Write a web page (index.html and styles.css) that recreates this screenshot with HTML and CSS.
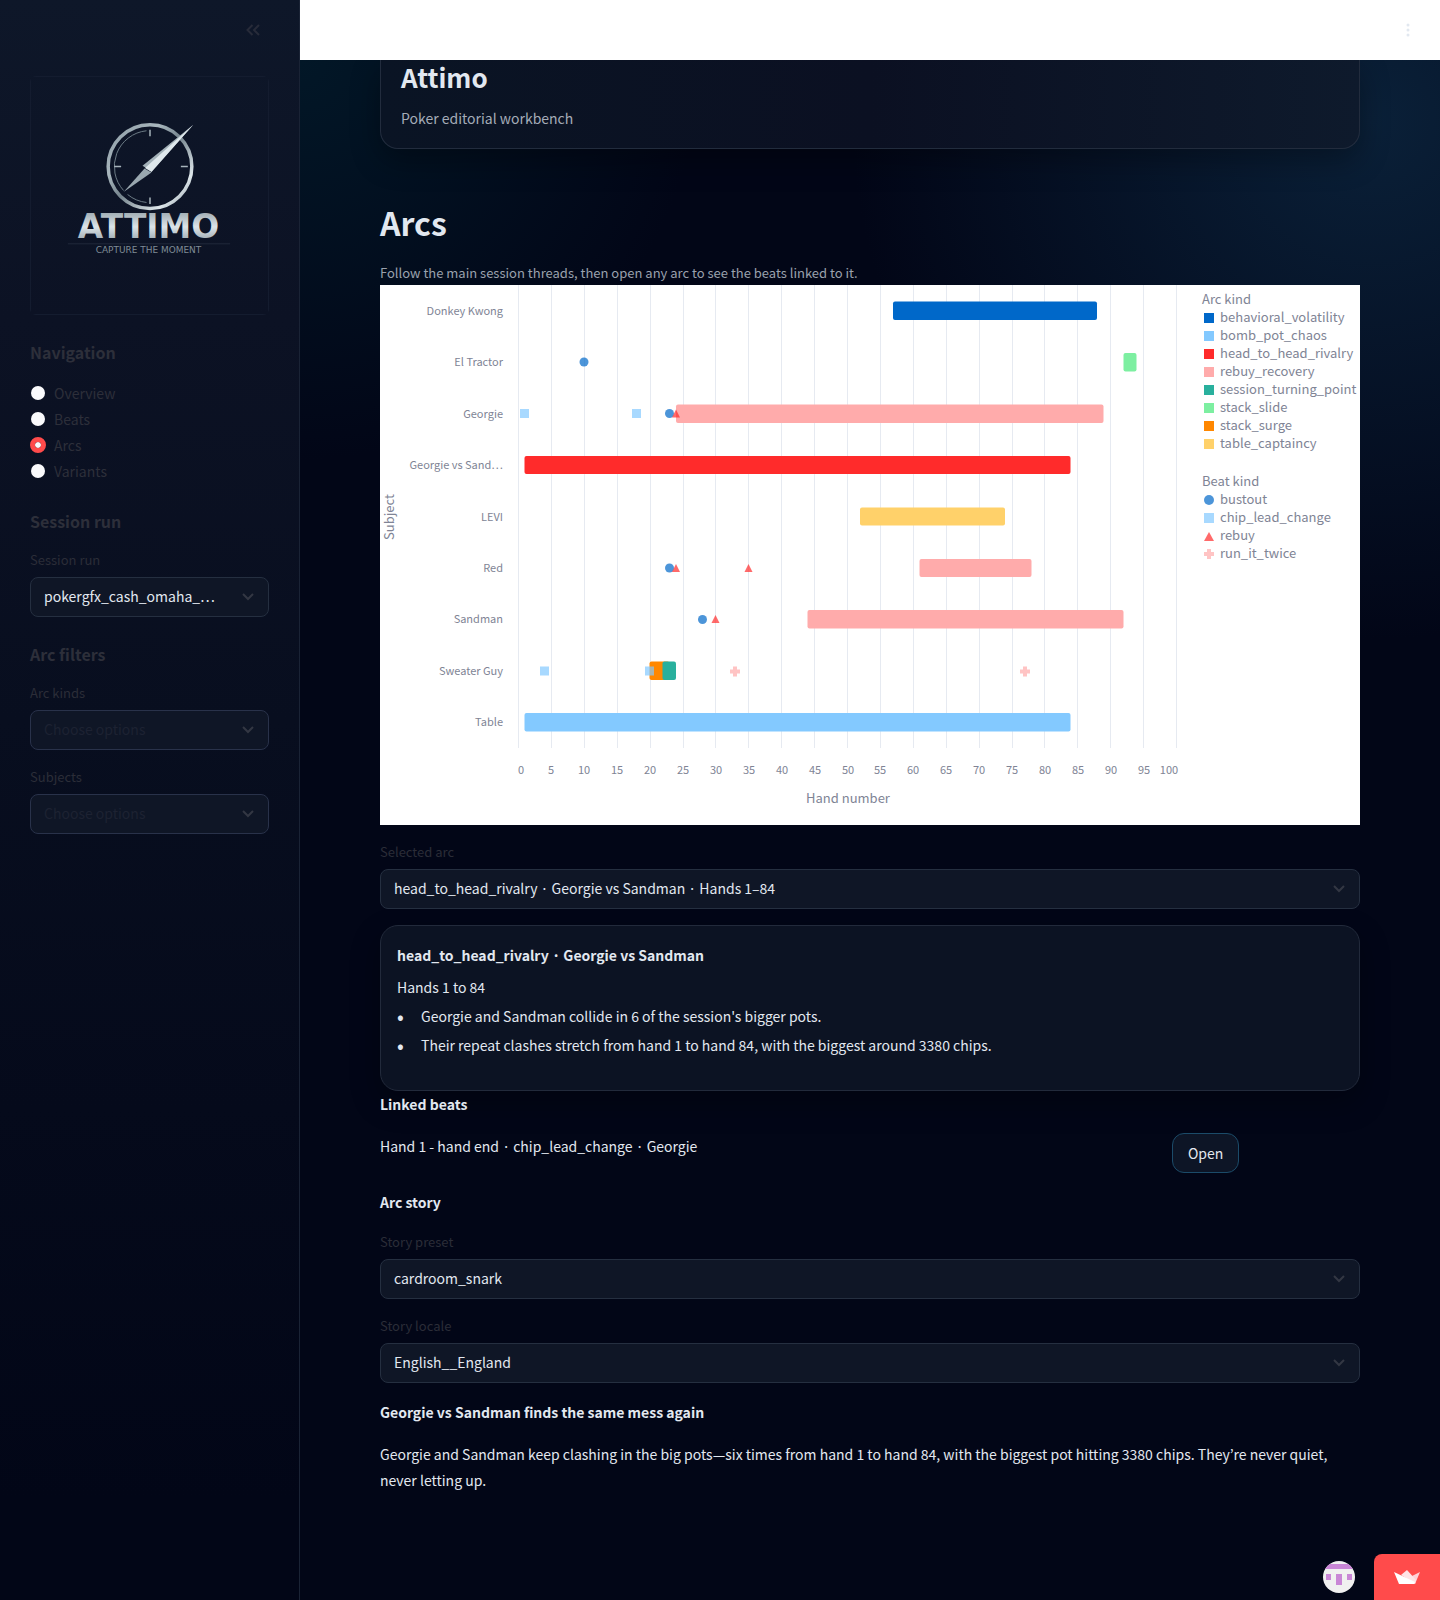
FILE: index.html
```html
<!DOCTYPE html>
<html lang="en">
<head>
  <meta charset="UTF-8">
  <meta name="viewport" content="width=device-width, initial-scale=1.0">
  <title>Attimo - Arcs</title>
  <link rel="stylesheet" href="styles.css">
</head>
<body>

  <!-- Sidebar -->
  <aside class="sidebar">
    <div class="sidebar-top">
      <button class="icon-btn" type="button" aria-label="Collapse sidebar">
        <svg width="20" height="20" viewBox="0 0 20 20" fill="none" stroke="currentColor" stroke-width="2"><path d="M9.5 5 4.5 10l5 5M16 5l-5 5 5 5"/></svg>
      </button>
    </div>

    <svg class="logo" viewBox="0 0 240 240" role="img" aria-label="Attimo, capture the moment">
      <defs>
        <linearGradient id="ring" x1="0" y1="0" x2="1" y2="1">
          <stop offset="0" stop-color="#8b9aa3"/>
          <stop offset=".3" stop-color="#a9b7be"/>
          <stop offset=".5" stop-color="#75848d"/>
          <stop offset=".8" stop-color="#dde6ea"/>
          <stop offset="1" stop-color="#83929b"/>
        </linearGradient>
        <linearGradient id="steel" x1="0" y1="0" x2="0" y2="1">
          <stop offset="0" stop-color="#8c9aa2"/>
          <stop offset=".5" stop-color="#dce4e8"/>
          <stop offset="1" stop-color="#84929b"/>
        </linearGradient>
      </defs>
      <rect class="logo-frame" x="0.5" y="0.5" width="239" height="239"/>
      <circle cx="120.5" cy="91" r="42" fill="none" stroke="url(#ring)" stroke-width="3.5"/>
      <path d="M117 55A36 36 0 0 0 94 115M98 119A36 36 0 0 0 117 127" fill="none" stroke="#6c7b85"/>
      <path d="M120.5 54v6.5M120.5 122v6.5M84.5 91h7M151.5 91h7" fill="none" stroke="#a7b4bb" stroke-width="1.5"/>
      <path d="M164 49 113 90l9 6z" fill="#a3b1b8"/>
      <path d="M164 49 122 96.5l-6.5-4z" fill="#dfe8ec"/>
      <path d="m115 93 7 4-28 19.5z" fill="#9aa8b0"/>
      <text class="logo-name" x="119" y="163" fill="url(#steel)">ATTIMO</text>
      <path d="M38 168.5h163" stroke="#20283a"/>
      <text class="logo-tag" x="119" y="178">CAPTURE THE MOMENT</text>
    </svg>

    <h3 class="side-title">Navigation</h3>
    <div class="radio-list">
      <label class="radio"><input type="radio" name="page">Overview</label>
      <label class="radio"><input type="radio" name="page">Beats</label>
      <label class="radio"><input type="radio" name="page" checked>Arcs</label>
      <label class="radio"><input type="radio" name="page">Variants</label>
    </div>

    <h3 class="side-title">Session run</h3>
    <div class="field">
      <label for="run">Session run</label>
      <div class="select">
        <select id="run"><option>pokergfx_cash_omaha_…</option></select>
        <svg width="12" height="8" viewBox="0 0 12 8"><path d="m1 1 5 5 5-5"/></svg>
      </div>
    </div>

    <h3 class="side-title">Arc filters</h3>
    <div class="field">
      <label for="kinds">Arc kinds</label>
      <div class="select empty">
        <select id="kinds"><option>Choose options</option></select>
        <svg width="12" height="8" viewBox="0 0 12 8"><path d="m1 1 5 5 5-5"/></svg>
      </div>
    </div>
    <div class="field">
      <label for="subjects">Subjects</label>
      <div class="select empty">
        <select id="subjects"><option>Choose options</option></select>
        <svg width="12" height="8" viewBox="0 0 12 8"><path d="m1 1 5 5 5-5"/></svg>
      </div>
    </div>
  </aside>

  <!-- Main column -->
  <div class="page">
    <header class="toolbar">
      <button class="icon-btn menu-btn" type="button" aria-label="Main menu">
        <svg width="20" height="20" viewBox="0 0 20 20" fill="currentColor"><circle cx="10" cy="5" r="1.5"/><circle cx="10" cy="10" r="1.5"/><circle cx="10" cy="15" r="1.5"/></svg>
      </button>
    </header>

    <main class="content">
      <section class="hero">
        <h1>Attimo</h1>
        <p>Poker editorial workbench</p>
      </section>

      <h2 class="page-title">Arcs</h2>
      <p class="caption">Follow the main session threads, then open any arc to see the beats linked to it.</p>

      <!-- Timeline: x = 138.5 + hand * 6.58, rows are 51.4 apart -->
      <svg class="chart" viewBox="0 0 980 540" role="img" aria-label="Arcs and beats by subject and hand number">
        <path class="grid" d="M138.5 0v463M171.5 0v463M204.5 0v463M237.5 0v463M270.5 0v463M303.5 0v463M335.5 0v463M368.5 0v463M401.5 0v463M434.5 0v463M467.5 0v463M500.5 0v463M533.5 0v463M566.5 0v463M599.5 0v463M632.5 0v463M664.5 0v463M697.5 0v463M730.5 0v463M763.5 0v463M796.5 0v463"/>

        <g class="bars">
          <rect class="volatility" x="513" y="16.5" width="204" height="18.5" rx="2"/>
          <rect class="slide" x="743.5" y="68" width="13" height="18.5" rx="2"/>
          <rect class="recovery" x="296" y="119.5" width="427.5" height="18.5" rx="2"/>
          <rect class="rivalry" x="144.5" y="171" width="546" height="18" rx="2"/>
          <rect class="captaincy" x="480" y="222.5" width="145" height="18" rx="2"/>
          <rect class="recovery" x="539.5" y="274" width="112" height="18" rx="2"/>
          <rect class="recovery" x="427.5" y="325" width="316" height="18.5" rx="2"/>
          <rect class="surge" x="269.5" y="376.5" width="20" height="18.5" rx="2"/>
          <rect class="turning" x="282.5" y="376.5" width="13.5" height="18.5" rx="2"/>
          <rect class="bomb" x="144.5" y="428" width="546" height="18.5" rx="2"/>
        </g>

        <g class="beats">
          <circle class="bustout" cx="204" cy="77" r="4.5"/>
          <rect class="lead" x="140" y="124" width="9" height="9"/>
          <rect class="lead" x="252" y="124" width="9" height="9"/>
          <circle class="bustout" cx="289.5" cy="128.5" r="4.5"/>
          <path class="rebuy" d="m296 124.5 4 8h-8z"/>
          <circle class="bustout" cx="289.5" cy="283" r="4.5"/>
          <path class="rebuy" d="m296 279 4 8h-8z"/>
          <path class="rebuy" d="m368.5 279 4 8h-8z"/>
          <circle class="bustout" cx="322.5" cy="334.5" r="4.5"/>
          <path class="rebuy" d="m335.5 330 4 8h-8z"/>
          <rect class="lead" x="160" y="381.5" width="9" height="9"/>
          <rect class="lead" x="265" y="381.5" width="9" height="9"/>
          <path class="twice" d="M353 381.5h4v3h3v4h-3v3h-4v-3h-3v-4h3z"/>
          <path class="twice" d="M643 381.5h4v3h3v4h-3v3h-4v-3h-3v-4h3z"/>
        </g>

        <g class="row-labels">
          <text x="123" y="30">Donkey Kwong</text>
          <text x="123" y="81">El Tractor</text>
          <text x="123" y="133">Georgie</text>
          <text x="123" y="184">Georgie vs Sand…</text>
          <text x="123" y="236">LEVI</text>
          <text x="123" y="287">Red</text>
          <text x="123" y="338">Sandman</text>
          <text x="123" y="390">Sweater Guy</text>
          <text x="123" y="441">Table</text>
        </g>

        <g class="ticks">
          <text x="141" y="489">0</text>
          <text x="171" y="489">5</text>
          <text x="204" y="489">10</text>
          <text x="237" y="489">15</text>
          <text x="270" y="489">20</text>
          <text x="303" y="489">25</text>
          <text x="336" y="489">30</text>
          <text x="369" y="489">35</text>
          <text x="402" y="489">40</text>
          <text x="435" y="489">45</text>
          <text x="468" y="489">50</text>
          <text x="500" y="489">55</text>
          <text x="533" y="489">60</text>
          <text x="566" y="489">65</text>
          <text x="599" y="489">70</text>
          <text x="632" y="489">75</text>
          <text x="665" y="489">80</text>
          <text x="698" y="489">85</text>
          <text x="731" y="489">90</text>
          <text x="764" y="489">95</text>
          <text x="789" y="489">100</text>
        </g>
        <text class="axis-title" x="468" y="518">Hand number</text>
        <text class="axis-title" transform="translate(14 232) rotate(-90)">Subject</text>

        <g class="legend">
          <text x="822" y="19">Arc kind</text>
          <rect class="volatility" x="824" y="28" width="10" height="10"/><text x="840" y="37">behavioral_volatility</text>
          <rect class="bomb" x="824" y="46" width="10" height="10"/><text x="840" y="55">bomb_pot_chaos</text>
          <rect class="rivalry" x="824" y="64" width="10" height="10"/><text x="840" y="73">head_to_head_rivalry</text>
          <rect class="recovery" x="824" y="82" width="10" height="10"/><text x="840" y="91">rebuy_recovery</text>
          <rect class="turning" x="824" y="100" width="10" height="10"/><text x="840" y="109">session_turning_point</text>
          <rect class="slide" x="824" y="118" width="10" height="10"/><text x="840" y="127">stack_slide</text>
          <rect class="surge" x="824" y="136" width="10" height="10"/><text x="840" y="145">stack_surge</text>
          <rect class="captaincy" x="824" y="154" width="10" height="10"/><text x="840" y="163">table_captaincy</text>

          <text x="822" y="201">Beat kind</text>
          <circle class="bustout" cx="829" cy="215" r="5"/><text x="840" y="219">bustout</text>
          <rect class="lead" x="824" y="228" width="10" height="10"/><text x="840" y="237">chip_lead_change</text>
          <path class="rebuy" d="m829 247 5 9h-10z"/><text x="840" y="255">rebuy</text>
          <path class="twice" d="M827 264h4v3h3v4h-3v3h-4v-3h-3v-4h3z"/><text x="840" y="273">run_it_twice</text>
        </g>
      </svg>

      <div class="field">
        <label for="arc">Selected arc</label>
        <div class="select">
          <select id="arc"><option>head_to_head_rivalry · Georgie vs Sandman · Hands 1–84</option></select>
          <svg width="12" height="8" viewBox="0 0 12 8"><path d="m1 1 5 5 5-5"/></svg>
        </div>
      </div>

      <section class="arc-card">
        <h3>head_to_head_rivalry · Georgie vs Sandman</h3>
        <p>Hands 1 to 84</p>
        <ul>
          <li>Georgie and Sandman collide in 6 of the session's bigger pots.</li>
          <li>Their repeat clashes stretch from hand 1 to hand 84, with the biggest around 3380 chips.</li>
        </ul>
      </section>

      <h3 class="block-title">Linked beats</h3>
      <div class="beat-row">
        <p>Hand 1 - hand end · chip_lead_change · Georgie</p>
        <div><button class="open-btn" type="button">Open</button></div>
      </div>

      <h3 class="block-title">Arc story</h3>
      <div class="field">
        <label for="preset">Story preset</label>
        <div class="select">
          <select id="preset"><option>cardroom_snark</option></select>
          <svg width="12" height="8" viewBox="0 0 12 8"><path d="m1 1 5 5 5-5"/></svg>
        </div>
      </div>
      <div class="field">
        <label for="locale">Story locale</label>
        <div class="select">
          <select id="locale"><option>English__England</option></select>
          <svg width="12" height="8" viewBox="0 0 12 8"><path d="m1 1 5 5 5-5"/></svg>
        </div>
      </div>

      <article class="story">
        <h3 class="block-title">Georgie vs Sandman finds the same mess again</h3>
        <p>Georgie and Sandman keep clashing in the big pots—six times from hand 1 to hand 84, with the biggest pot hitting 3380 chips. They’re never quiet, never letting up.</p>
      </article>
    </main>
  </div>

  <!-- Hosting badges -->
  <div class="badges">
    <a class="avatar" href="#" aria-label="Creator profile">
      <svg width="32" height="32" viewBox="0 0 32 32">
        <path fill="#f0f0f0" d="M0 0h32v32H0z"/>
        <path fill="#c986d6" d="M0 3h32v5H0zM3 13h5v6H3zM13 13h6v11h-6zM24 13h5v6h-5z"/>
      </svg>
    </a>
    <a class="host" href="#" aria-label="Hosted app">
      <svg width="26" height="14" viewBox="0 0 26 14">
        <path fill="#ffd0d6" d="M26 2 14 8l7 6z"/>
        <path fill="#ffe3e6" d="M13 0 7 5l14 9 1-4z"/>
        <path fill="#fff" d="m0 2 21 10-1 2H5z"/>
      </svg>
    </a>
  </div>

</body>
</html>
```

FILE: styles.css
```css
* {
  margin: 0;
  padding: 0;
  box-sizing: border-box;
}

body {
  display: flex;
  min-height: 100vh;
  font-family: "Noto Sans CJK KR", "Noto Sans", sans-serif;
  font-size: 14px;
  line-height: 26px;
  color: #e2e8f0;
  background-color: #020617;
}

button, select {
  font: inherit;
}

/* Sidebar */
.sidebar {
  flex: none;
  width: 300px;
  padding: 0 30px;
  border-right: 1px solid #1a2335;
  background: linear-gradient(180deg, #0e1729 0, #0c1224 320px, #080e1f 720px, #020617 1500px);
  color: #2d2f3a;
}

.sidebar-top {
  display: flex;
  justify-content: flex-end;
  padding: 20px 6px 36px 0;
}

.icon-btn {
  display: flex;
  border: none;
  background: none;
  color: #272b39;
  cursor: pointer;
}

.logo {
  display: block;
  width: 100%;
  border-radius: 6px;
}

.logo-frame {
  fill: none;
  stroke: #151d30;
}

.logo-name {
  font: bold 33px "DejaVu Sans", sans-serif;
  text-anchor: middle;
}

.logo-tag {
  font: 9px "DejaVu Sans", sans-serif;
  text-anchor: middle;
  fill: #7f8b95;
}

.side-title {
  margin: 23px 0 14px;
  font-size: 16px;
  font-weight: 600;
  line-height: 28px;
}

.radio {
  display: flex;
  align-items: center;
  gap: 8px;
  cursor: pointer;
}

.radio-list {
  display: flex;
  flex-direction: column;
}

.radio input {
  appearance: none;
  width: 16px;
  height: 16px;
  border: 1px solid transparent;
  border-radius: 50%;
  background: #fafafc padding-box;
}

.radio input:checked {
  border: 5px solid #ff4b4b;
}

/* Select fields */
.field {
  margin-bottom: 16px;
}

.field label {
  display: block;
  font-size: 13px;
  line-height: 22px;
  padding-bottom: 6px;
  color: #2b2d38;
}

.select {
  position: relative;
}

.select select {
  display: block;
  appearance: none;
  width: 100%;
  height: 40px;
  padding: 0 40px 2px 13px;
  border: 1px solid #252f40;
  border-radius: 8px;
  background-color: #0f1626;
  color: #e2e8f0;
}

.select svg {
  position: absolute;
  right: 15px;
  top: 16px;
  fill: none;
  stroke: #333743;
  stroke-width: 2;
  pointer-events: none;
}

.select.empty select {
  color: #1d2232;
  border-color: #29324a;
}

/* Toolbar */
.page {
  flex: 1;
  min-width: 0;
  background:
    radial-gradient(circle at 0 60px, #021727, transparent 400px),
    radial-gradient(circle at 94% 120px, #0a2038, transparent 520px);
}

.toolbar {
  position: relative;
  z-index: 1;
  display: flex;
  justify-content: flex-end;
  align-items: center;
  height: 60px;
  padding-right: 22px;
  background: #fff;
}

.menu-btn {
  color: #e2e8f0;
}

.content {
  padding: 0 80px 80px;
}

/* Hero */
.hero {
  padding: 0 20px 17px;
  border: 1px solid #222c3d;
  border-top: none;
  border-radius: 0 0 18px 18px;
  background: linear-gradient(90deg, #0a1424, #0b1022 50%, #0e1a2c);
  box-shadow: 0 12px 30px rgba(0, 0, 0, 0.3);
}

.hero h1 {
  font-size: 26px;
  line-height: 34px;
  padding-bottom: 11px;
}

.hero p {
  color: #a5acb8;
}

.page-title {
  margin: 48px 0 14px;
  font-size: 32px;
  font-weight: 600;
  line-height: 50px;
}

.caption {
  font-size: 13px;
  line-height: 24px;
  color: #9aa1ad;
}

/* Chart */
.chart {
  display: block;
  width: 100%;
  margin-bottom: 16px;
  background: #fff;
}

.chart text {
  fill: #808495;
  font-size: 13px;
}

.chart .row-labels text {
  font-size: 11px;
  text-anchor: end;
}

.chart .ticks text {
  font-size: 11px;
  text-anchor: middle;
}

.chart .axis-title {
  text-anchor: middle;
}

.grid {
  fill: none;
  stroke: #e6eaf1;
}

.volatility { fill: #0068c9; }
.bomb { fill: #83c9ff; }
.rivalry { fill: #ff2b2b; }
.recovery { fill: #ffabab; }
.turning { fill: #29b09d; }
.slide { fill: #7defa1; }
.surge { fill: #ff8700; }
.captaincy { fill: #ffd16a; }
.bustout { fill: #0068c9; opacity: 0.7; }
.lead { fill: #83c9ff; opacity: 0.7; }
.rebuy { fill: #ff2b2b; opacity: 0.7; }
.twice { fill: #ffabab; opacity: 0.7; }

/* Selected arc */
.arc-card {
  padding: 16px 16px 32px;
  border: 1px solid #222a3b;
  border-radius: 18px;
  background: #0c1323;
  box-shadow: 0 12px 30px rgba(0, 0, 0, 0.3);
}

.arc-card h3 {
  font-size: 14px;
  padding-bottom: 6px;
}

.arc-card ul {
  list-style: none;
}

.arc-card li {
  display: flex;
  padding-top: 3px;
}

.arc-card li::before {
  content: "•";
  flex: none;
  width: 24px;
  font-size: 20px;
}

.block-title {
  font-size: 14px;
  line-height: 26px;
}

.beat-row {
  display: grid;
  grid-template-columns: 33fr 8fr;
  gap: 16px;
  padding: 16px 0;
}

.open-btn {
  display: block;
  height: 40px;
  padding: 0 15px;
  border: 1px solid #1b4b69;
  border-radius: 12px;
  background: #0d1526;
  color: #e2e8f0;
  cursor: pointer;
}

.beat-row + .block-title,
.story .block-title {
  margin-bottom: 16px;
}

/* Badges */
.badges {
  position: fixed;
  right: 0;
  bottom: 0;
  display: flex;
  align-items: center;
  gap: 19px;
}

.avatar svg {
  display: block;
  border-radius: 50%;
}

.host {
  display: flex;
  align-items: center;
  justify-content: center;
  width: 66px;
  height: 46px;
  border-radius: 8px 0 0 0;
  background: #ff4b4b;
}
```
